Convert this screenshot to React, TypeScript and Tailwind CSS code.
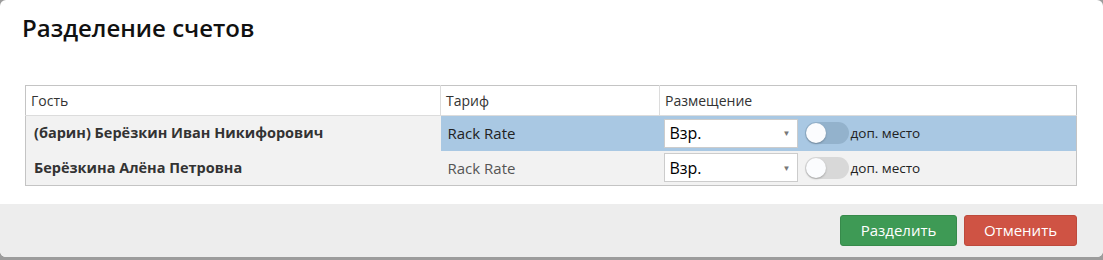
type Guest = { name: string; tariff: string; placement: string; selected?: boolean };

const guests: Guest[] = [
  { name: "(барин) Берёзкин Иван Никифорович", tariff: "Rack Rate", placement: "Взр.", selected: true },
  { name: "Берёзкина Алёна Петровна", tariff: "Rack Rate", placement: "Взр." },
];

const Toggle = ({ selected }: { selected?: boolean }) => (
  <div
    className={`relative h-[22px] w-[44px] rounded-full ${selected ? "bg-[#93b2cc]" : "bg-[#d8d8d8]"}`}
  >
    <div className="absolute left-[1px] top-[1px] h-[20px] w-[20px] rounded-full bg-[#fbfcfe] shadow-[0_1px_2px_rgba(0,0,0,0.25)]" />
  </div>
);

export default function App() {
  return (
    <div className="h-[260px] w-[1103px] bg-[#9c9c9c] font-['Open_Sans',sans-serif]">
      <div className="flex h-[257px] flex-col overflow-hidden rounded-[6px] bg-white">
        <h1 className="pl-[22px] pt-[13px] text-[24px] font-semibold leading-[30px] text-[#111]">Разделение счетов</h1>

        <div className="px-[25px] pt-[42px]">
          <table className="w-[1052px] table-fixed border-collapse border border-[#c4c4c4] text-[14px]">
            <colgroup>
              <col className="w-[415px]" />
              <col className="w-[219px]" />
              <col />
            </colgroup>
            <thead>
              <tr className="h-[30px] border-b border-[#dcdcdc] text-left text-[#333]">
                <th className="border-r border-[#dcdcdc] px-[5px] font-normal">Гость</th>
                <th className="border-r border-[#dcdcdc] px-[5px] font-normal">Тариф</th>
                <th className="px-[5px] font-normal">Размещение</th>
              </tr>
            </thead>
            <tbody>
              {guests.map((g) => (
                <tr key={g.name} className="h-[35px] bg-[#f2f2f2]">
                  <td className="pl-[8px] text-[14.5px] font-bold text-[#333]">{g.name}</td>
                  <td
                    className={`pl-[7px] text-[15px] ${g.selected ? "bg-[#a9c8e3] text-[#222]" : "text-[#555]"}`}
                  >
                    {g.tariff}
                  </td>
                  <td className={`pl-[4px] ${g.selected ? "bg-[#a9c8e3]" : ""}`}>
                    <div className="flex items-center gap-[2px]">
                      <div className="flex h-[29px] w-[134px] items-center justify-between border border-[#ccc] bg-white pl-[5px] pr-[6px] text-[16px] text-black">
                        <span>{g.placement}</span>
                        <span className="text-[8px] text-[#777]">▼</span>
                      </div>
                      <div className="ml-[5px]">
                        <Toggle selected={g.selected} />
                      </div>
                      <span className="text-[13.5px] text-[#222]">доп. место</span>
                    </div>
                  </td>
                </tr>
              ))}
            </tbody>
          </table>
        </div>

        <div className="mt-auto flex h-[53px] items-start justify-end gap-[7px] bg-[#ededed] pr-[26px] pt-[11px]">
          <button className="h-[31px] w-[117px] rounded-[3px] border border-[#378a4b] bg-[#3e9a55] text-[15px] text-white">
            Разделить
          </button>
          <button className="h-[31px] w-[113px] rounded-[3px] border border-[#bd4a3c] bg-[#cf5344] text-[15px] text-white">
            Отменить
          </button>
        </div>
      </div>
    </div>
  );
}
